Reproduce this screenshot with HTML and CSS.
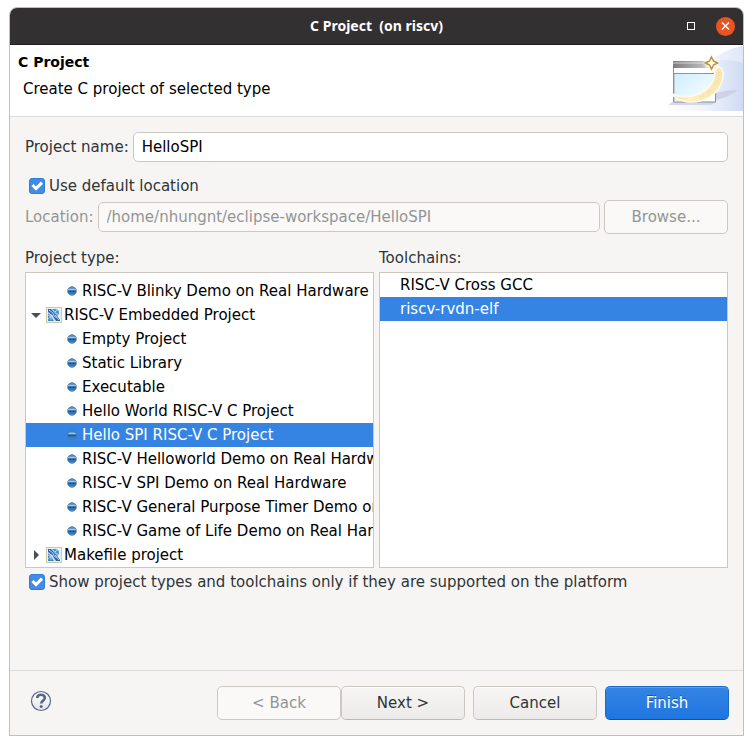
FILE: index.html
```
<!DOCTYPE html>
<html lang="en">
<head>
<meta charset="utf-8">
<title>C Project (on riscv)</title>
<link rel="stylesheet" href="styles.css">
</head>
<body>
<svg class="defs" aria-hidden="true">
  <defs>
    <linearGradient id="ball" x1="0" y1="0" x2="0" y2="1">
      <stop offset="0" stop-color="#4d7fae"/>
      <stop offset=".35" stop-color="#7fb0d6"/>
      <stop offset=".5" stop-color="#1f5f9c"/>
      <stop offset="1" stop-color="#4a9ad4"/>
    </linearGradient>
    <symbol id="bullet" viewBox="0 0 10 10">
      <circle cx="5" cy="5" r="4.3" fill="url(#ball)" stroke="#3a75a8" stroke-width=".8"/>
      <path d="M1.500 3.500h7" stroke="#9cc3e0" stroke-width="1"/>
      <path d="M1 5.500h8" stroke="#1b5c98" stroke-width="1"/>
    </symbol>
    <symbol id="folder" viewBox="0 0 16 16">
      <rect x=".5" y=".5" width="15" height="15" fill="#e9f1f5" stroke="#c9cba4"/>
      <path d="M2 2h3l4 4 5 7v1h-4L6 8 2 5z" fill="#2f62b4"/>
      <path d="M6 2h4l3 2v3l-2 2-2-2z" fill="#4b9ad8"/>
      <path d="M2 6l3 3 3 5H2z" fill="#3f86cc"/>
      <path d="M3 3l4 3 1 3 3 2M7 3l3 4 2 0M2 8l3 2 0 3M2 12l5-4M9 8l4 5M11 3l-2 2" fill="none" stroke="#b9dff2" stroke-width=".9"/>
    </symbol>
  </defs>
</svg>
<main class="window">
  <div class="titlebar">
    <h1 class="window-title">C Project  (on riscv)</h1>
    <div class="window-controls">
      <button class="maximize" type="button" aria-label="Maximize"></button>
      <button class="close" type="button" aria-label="Close">
        <svg width="19" height="19" viewBox="0 0 19 19"><path d="M6 5.500l7 7M13 5.500l-7 7" stroke="#fff" stroke-width="1.500"/></svg>
      </button>
    </div>
  </div>
  <header class="banner">
    <div class="banner-text">
      <h2 class="banner-title">C Project</h2>
      <p class="banner-message">Create C project of selected type</p>
    </div>
    <svg class="banner-art" width="75" height="66" viewBox="0 0 75 66" aria-hidden="true">
      <defs>
        <linearGradient id="wash" x1="0" y1="0" x2="1" y2="0">
          <stop offset="0" stop-color="#fcfdff"/><stop offset=".5" stop-color="#eff3fc"/><stop offset="1" stop-color="#cfdbf3"/>
        </linearGradient>
        <linearGradient id="glass" x1="0" y1="0" x2="1" y2="1">
          <stop offset="0" stop-color="#cdeeff"/><stop offset="1" stop-color="#fff"/>
        </linearGradient>
        <linearGradient id="bar" x1="0" y1="0" x2="1" y2="0">
          <stop offset="0" stop-color="#7d7d7d"/><stop offset="1" stop-color="#d6d6d6"/>
        </linearGradient>
        <linearGradient id="arc" x1="0" y1="0" x2="1" y2="0">
          <stop offset="0" stop-color="#f7dc8e"/><stop offset=".35" stop-color="#fff0bd"/><stop offset="1" stop-color="#f6e6b4"/>
        </linearGradient>
        <radialGradient id="glow">
          <stop offset=".4" stop-color="#fff"/><stop offset="1" stop-color="#fff" stop-opacity="0"/>
        </radialGradient>
      </defs>
      <path d="M75 1v65H0v-6C30 56 43 38 40 19Q54 5 75 1z" fill="url(#wash)"/>
      <path d="M75 2v16Q62 14 46 15 57 4 75 2z" fill="#fff" opacity=".35"/>
      <path d="M48 48q10-3 22-3-9 7-22 10zM4 57h44l-5 3H0z" fill="#c3c6dd" opacity=".65"/>
      <path d="M5.500 17h42v40h-42z" fill="#fff" stroke="#8d8d8d"/>
      <path d="M5 16h43v7H5z" fill="url(#bar)"/>
      <path d="M5 17h40v2H5z" fill="#fff" opacity=".3"/>
      <path d="M6 56V28.500h40" fill="none" stroke="#7f9aa8"/>
      <path d="M7 29h40v27H7z" fill="url(#glass)"/>
      <path d="M2 48C19 57 46 49 47 26q2-6 6-3 3 3 2 9C51 57 18 65 2 48z" fill="url(#arc)" stroke="#fffbea" stroke-width="1.500"/>
      <path d="M51 27l-1 5M49 36l-3 5M43 45l-4 4M36 51l-5 2" stroke="#eed98f" stroke-width="1.500" stroke-dasharray="1 2"/>
      <circle cx="43.500" cy="18" r="9" fill="url(#glow)"/>
      <path d="M43.500 12l2 4 4 2-4 2-2 4-2-4-4-2 4-2z" fill="#fffbe6" stroke="#b9933a" stroke-width="1.500"/>
    </svg>
  </header>
  <form class="content">
    <div class="field">
      <label for="name">Project name:</label>
      <input class="textbox" id="name" type="text" value="HelloSPI">
    </div>
    <div class="option option-location">
      <input class="check" type="checkbox" id="default-location" checked>
      <label for="default-location">Use default location</label>
    </div>
    <div class="field">
      <label class="dim" for="location">Location:</label>
      <input class="textbox" id="location" type="text" value="/home/nhungnt/eclipse-workspace/HelloSPI" disabled>
      <button class="btn" type="button" disabled>Browse...</button>
    </div>
    <div class="panes">
      <section class="pane">
        <h3 class="pane-label" id="types-label">Project type:</h3>
        <ul class="list tree" role="tree" aria-labelledby="types-label">
          <li class="row leaf" role="treeitem"><svg class="bullet"><use href="#bullet"/></svg>RISC-V Blinky Demo on Real Hardware</li>
          <li class="row" role="treeitem"><svg class="arrow" viewBox="0 0 10 10"><path d="M0 3h10L5 8z"/></svg><svg class="folder"><use href="#folder"/></svg>RISC-V Embedded Project</li>
          <li class="row leaf" role="treeitem"><svg class="bullet"><use href="#bullet"/></svg>Empty Project</li>
          <li class="row leaf" role="treeitem"><svg class="bullet"><use href="#bullet"/></svg>Static Library</li>
          <li class="row leaf" role="treeitem"><svg class="bullet"><use href="#bullet"/></svg>Executable</li>
          <li class="row leaf" role="treeitem"><svg class="bullet"><use href="#bullet"/></svg>Hello World RISC-V C Project</li>
          <li class="row leaf selected" role="treeitem"><svg class="bullet"><use href="#bullet"/></svg>Hello SPI RISC-V C Project</li>
          <li class="row leaf" role="treeitem"><svg class="bullet"><use href="#bullet"/></svg>RISC-V Helloworld Demo on Real Hardware</li>
          <li class="row leaf" role="treeitem"><svg class="bullet"><use href="#bullet"/></svg>RISC-V SPI Demo on Real Hardware</li>
          <li class="row leaf" role="treeitem"><svg class="bullet"><use href="#bullet"/></svg>RISC-V General Purpose Timer Demo on Real Hardware</li>
          <li class="row leaf" role="treeitem"><svg class="bullet"><use href="#bullet"/></svg>RISC-V Game of Life Demo on Real Hardware</li>
          <li class="row" role="treeitem"><svg class="arrow" viewBox="0 0 10 10"><path d="M3 0v10l5-5z"/></svg><svg class="folder"><use href="#folder"/></svg>Makefile project</li>
        </ul>
      </section>
      <section class="pane">
        <h3 class="pane-label" id="chains-label">Toolchains:</h3>
        <ul class="list chains" role="listbox" aria-labelledby="chains-label">
          <li class="row" role="option">RISC-V Cross GCC</li>
          <li class="row selected" role="option">riscv-rvdn-elf</li>
        </ul>
      </section>
    </div>
    <div class="option option-platform">
      <input class="check" type="checkbox" id="supported" checked>
      <label for="supported">Show project types and toolchains only if they are supported on the platform</label>
    </div>
  </form>
  <footer class="footer">
    <button class="help" type="button" aria-label="Help">
      <svg width="22" height="22" viewBox="0 0 22 22">
        <defs><linearGradient id="helpfill" x1="0" y1="0" x2="0" y2="1"><stop offset="0" stop-color="#fff"/><stop offset="1" stop-color="#e4e4e6"/></linearGradient></defs>
        <circle cx="11" cy="11" r="9.500" fill="url(#helpfill)" stroke="#56678c" stroke-width="1.200"/>
        <path d="M7.200 8C7.200 3.600 14.800 3.600 14.800 8c0 2.600-3.600 2.700-3.600 5.600" fill="none" stroke="#56678c" stroke-width="2.600"/>
        <circle cx="11.200" cy="16.500" r="1.500" fill="#56678c"/>
      </svg>
    </button>
    <div class="actions">
      <div class="steps">
        <button class="btn" type="button" disabled>&lt; Back</button>
        <button class="btn" type="button">Next &gt;</button>
      </div>
      <button class="btn" type="button">Cancel</button>
      <button class="btn primary" type="button">Finish</button>
    </div>
  </footer>
</main>
</body>
</html>
```
FILE: styles.css
```
* { box-sizing: border-box; }

body {
  margin: 0;
  padding: 7px 9px 9px;
  min-height: 100vh;
  display: flex;
  background: #fff;
  color: #2e3436;
  font-family: "DejaVu Sans", sans-serif;
  font-size: 15px;
  line-height: 24px;
}

h1, h2, h3, p, ul { margin: 0; padding: 0; }
ul { list-style: none; }
button, input { font: inherit; color: inherit; margin: 0; }
svg { flex: none; display: block; }
.defs { position: absolute; width: 0; height: 0; }

.window {
  flex: 1;
  min-width: 0;
  display: flex;
  flex-direction: column;
  background: #f6f5f4;
  border: 1px solid #bfbfbf;
  border-radius: 8px 8px 0 0;
  overflow: hidden;
}

.titlebar {
  display: grid;
  grid-template-columns: 1fr auto 1fr;
  align-items: center;
  height: 37px;
  padding: 0 8px;
  background: #333031;
  border-bottom: 1px solid #1f1d1e;
  color: #fff;
}
.window-title {
  grid-column: 2;
  font: bold 14px/20px "Noto Sans", sans-serif;
  white-space: pre;
}
.window-controls {
  display: flex;
  justify-content: flex-end;
  align-items: center;
  gap: 21px;
}
.maximize {
  width: 8px;
  height: 8px;
  padding: 0;
  background: none;
  border: 1px solid #fff;
}
.close {
  width: 19px;
  height: 19px;
  padding: 0;
  border: 0;
  border-radius: 50%;
  background: #e95420;
}

.banner {
  display: flex;
  justify-content: space-between;
  height: 72px;
  background: #fff;
  border-bottom: 1px solid #dcdcdc;
  color: #000;
}
.banner-text { padding: 5px 8px; }
.banner-title { font-size: 14px; line-height: 24px; }
.banner-message { padding: 3px 5px; }

.content {
  flex: 1;
  padding: 15px;
}
.field {
  display: flex;
  align-items: center;
  gap: 4px;
}
.textbox {
  flex: 1;
  min-width: 0;
  height: 30px;
  padding: 0 8px;
  background: #fff;
  border: 1px solid #cdc7c2;
  border-radius: 5px;
  color: #000;
}
.textbox:disabled { background: #faf9f8; color: #929595; }
.dim { color: #929595; }

.option {
  display: flex;
  align-items: center;
  gap: 4px;
  padding-left: 4px;
}
.option-location { margin: 12px 0 2px; }
.option-platform { margin-top: 2px; }
.check {
  appearance: none;
  flex: none;
  width: 16px;
  height: 16px;
  border: 1px solid #2f7bdc;
  border-radius: 3px;
  background: #428be6 url("data:image/svg+xml,%3Csvg xmlns='http://www.w3.org/2000/svg' viewBox='0 0 14 14'%3E%3Cpath d='M2.500 6l3.500 3.600 6-6' fill='none' stroke='white' stroke-width='3'/%3E%3C/svg%3E");
}

.btn {
  width: 124px;
  height: 34px;
  padding: 0;
  border: 1px solid #cdc7c2;
  border-bottom-color: #bfb8b1;
  border-radius: 5px;
  background: linear-gradient(#f6f5f4, #edebe9);
  box-shadow: inset 0 1px #fff;
}
.btn:disabled {
  background: #faf9f8;
  border-color: #cdc7c2;
  color: #929595;
  box-shadow: none;
}
.primary {
  background: linear-gradient(#3584e4, #1f76e1);
  border-color: #1b6acb;
  border-bottom-color: #15539e;
  box-shadow: inset 0 1px #5d9de9;
  color: #fff;
  text-shadow: 0 -1px rgba(0, 0, 0, .35);
}

.panes {
  display: grid;
  grid-template-columns: 1fr 1fr;
  gap: 5px;
  margin-top: 12px;
}
.pane {
  min-width: 0;
  display: flex;
  flex-direction: column;
}
.pane-label { font-size: 15px; font-weight: normal; line-height: 24px; margin-bottom: 2px; }
.list {
  flex: 1;
  overflow: hidden;
  background: #fff;
  border: 1px solid #cdc7c2;
  color: #000;
}
.tree { padding-top: 6px; }
.row {
  display: flex;
  align-items: center;
  height: 24px;
  padding-left: 5px;
  white-space: nowrap;
}
.leaf { padding-left: 41px; }
.chains .row { padding-left: 20px; }
.selected { background: #3584e4; color: #fff; }
.bullet { width: 10px; height: 10px; margin-right: 5px; }
.arrow { width: 10px; height: 10px; margin-right: 5px; fill: #4a4f51; }
.folder { width: 16px; height: 16px; margin-right: 2px; }

.footer {
  display: flex;
  align-items: center;
  justify-content: space-between;
  padding: 15px 14px 15px 20px;
  border-top: 1px solid #dcdcdc;
}
.help {
  width: 22px;
  height: 26px;
  padding: 0 0 4px;
  border: 0;
  background: none;
}
.actions { display: flex; gap: 8px; }
.steps { display: flex; }
```
